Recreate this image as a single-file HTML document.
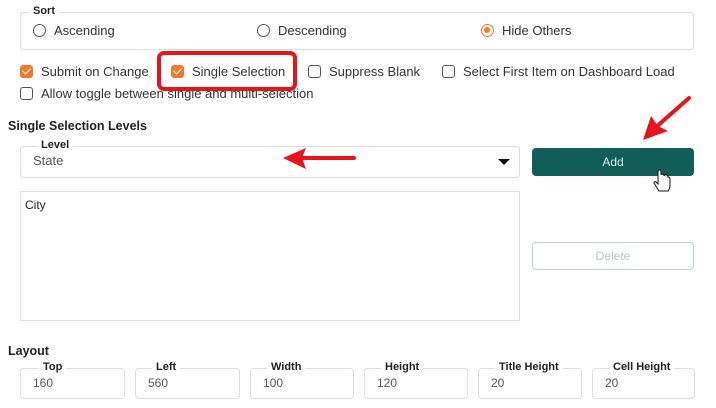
<!DOCTYPE html>
<html><head><meta charset="utf-8"><style>
*{box-sizing:border-box;margin:0;padding:0}
body{width:716px;height:408px;background:#fff;font-family:"Liberation Sans",sans-serif;font-size:13px;color:#333;position:relative;overflow:hidden}
.abs{position:absolute}
.fs{position:absolute;border:1px solid #ddd;border-radius:4px}
.lg{position:absolute;top:-8px;background:#fff;padding:0 4px;font-size:11px;font-weight:bold;color:#222}
.radio{position:absolute;width:13px;height:13px;border:1.5px solid #555;border-radius:50%}
.cb{position:absolute;width:13px;height:13px;border:1.5px solid #555;border-radius:3px}
.cb.on{background:#f07a2a;border-color:#f07a2a}
.cb.on::after{content:"";position:absolute;left:3px;top:0px;width:4px;height:7px;border:solid #fff;border-width:0 1.5px 1.5px 0;transform:rotate(45deg)}
.t{position:absolute;white-space:nowrap}
.h{position:absolute;font-weight:bold;font-size:12.5px;color:#222}
</style></head><body>
<div class="fs" style="left:20px;top:12px;width:674px;height:38px"><span class="lg" style="left:8px">Sort</span></div>
<div class="radio" style="left:33px;top:24px"></div><span class="t" style="left:54px;top:23px">Ascending</span>
<div class="radio" style="left:257px;top:24px"></div><span class="t" style="left:278px;top:23px">Descending</span>
<div class="radio" style="left:481px;top:24px;border-color:#f07a2a"><div style="position:absolute;left:2px;top:2px;width:6px;height:6px;border-radius:50%;background:#f07a2a"></div></div><span class="t" style="left:502px;top:23px">Hide Others</span>

<div class="cb on" style="left:20px;top:65px"></div><span class="t" style="left:41px;top:64px">Submit on Change</span>
<div class="cb on" style="left:171px;top:65px"></div><span class="t" style="left:192px;top:64px">Single Selection</span>
<div class="cb" style="left:308px;top:65px"></div><span class="t" style="left:329px;top:64px">Suppress Blank</span>
<div class="cb" style="left:442px;top:65px"></div><span class="t" style="left:463px;top:64px">Select First Item on Dashboard Load</span>
<div class="cb" style="left:20px;top:87px"></div><span class="t" style="left:41px;top:86px">Allow toggle between single and multi-selection</span>
<div class="abs" style="left:157px;top:51px;width:140px;height:40px;border:4px solid #e8141b;border-radius:7px"></div>

<div class="h" style="left:8px;top:119px">Single Selection Levels</div>
<div class="fs" style="left:20px;top:146px;width:500px;height:32px"><span class="lg" style="left:16px">Level</span></div>
<span class="t" style="left:33px;top:153px;color:#555">State</span>
<div class="abs" style="left:498px;top:159px;width:0;height:0;border-left:6px solid transparent;border-right:6px solid transparent;border-top:6px solid #111"></div>
<div class="abs" style="left:532px;top:148px;width:162px;height:28px;background:#115e59;border-radius:4px;color:#d8f3f0;text-align:center;line-height:28px;font-size:12px">Add</div>
<div class="abs" style="left:20px;top:191px;width:500px;height:130px;border:1px solid #ddd"></div>
<span class="t" style="left:25px;top:198px;color:#222;font-size:12px">City</span>
<div class="abs" style="left:532px;top:242px;width:162px;height:28px;border:1px solid #bcd3d1;border-radius:4px;color:#b5cac8;text-align:center;line-height:26px;font-size:12px">Delete</div>

<div class="h" style="left:8px;top:344px">Layout</div>
<div class="fs" style="left:20px;top:368px;width:105px;height:31px"><span class="lg" style="left:18px">Top</span><span class="t" style="left:12px;top:7px;color:#555;font-size:12px">160</span></div>
<div class="fs" style="left:135px;top:368px;width:105px;height:31px"><span class="lg" style="left:16px">Left</span><span class="t" style="left:12px;top:7px;color:#555;font-size:12px">560</span></div>
<div class="fs" style="left:250px;top:368px;width:104px;height:31px"><span class="lg" style="left:16px">Width</span><span class="t" style="left:12px;top:7px;color:#555;font-size:12px">100</span></div>
<div class="fs" style="left:364px;top:368px;width:104px;height:31px"><span class="lg" style="left:16px">Height</span><span class="t" style="left:12px;top:7px;color:#555;font-size:12px">120</span></div>
<div class="fs" style="left:478px;top:368px;width:104px;height:31px"><span class="lg" style="left:16px">Title Height</span><span class="t" style="left:12px;top:7px;color:#555;font-size:12px">20</span></div>
<div class="fs" style="left:592px;top:368px;width:103px;height:31px"><span class="lg" style="left:16px">Cell Height</span><span class="t" style="left:12px;top:7px;color:#555;font-size:12px">20</span></div>

<svg class="abs" style="left:0;top:0" width="716" height="408">
<line x1="354" y1="158" x2="298" y2="158" stroke="#e8141b" stroke-width="4" stroke-linecap="round"/>
<polygon points="283,158 306,148 302,158 306,169" fill="#e8141b"/>
<line x1="689" y1="98" x2="655" y2="128" stroke="#e8141b" stroke-width="4" stroke-linecap="round"/>
<polygon points="643,140 651,116 658,126 668,131" fill="#e8141b"/>
<path d="M658 172 v12 l-2-2 q-2-1-2 1 l5 8 h9 q2-3 2-6 v-6 q0-2-2-2 v0 q0-2-2-2 q-1-1-2 1 q0-2-2-2 q-1 0-1 1 v-3 q0-2-2-2 q-1 0-1 2z" fill="#fff" stroke="#111" stroke-width="1"/>
</svg>
</body></html>
